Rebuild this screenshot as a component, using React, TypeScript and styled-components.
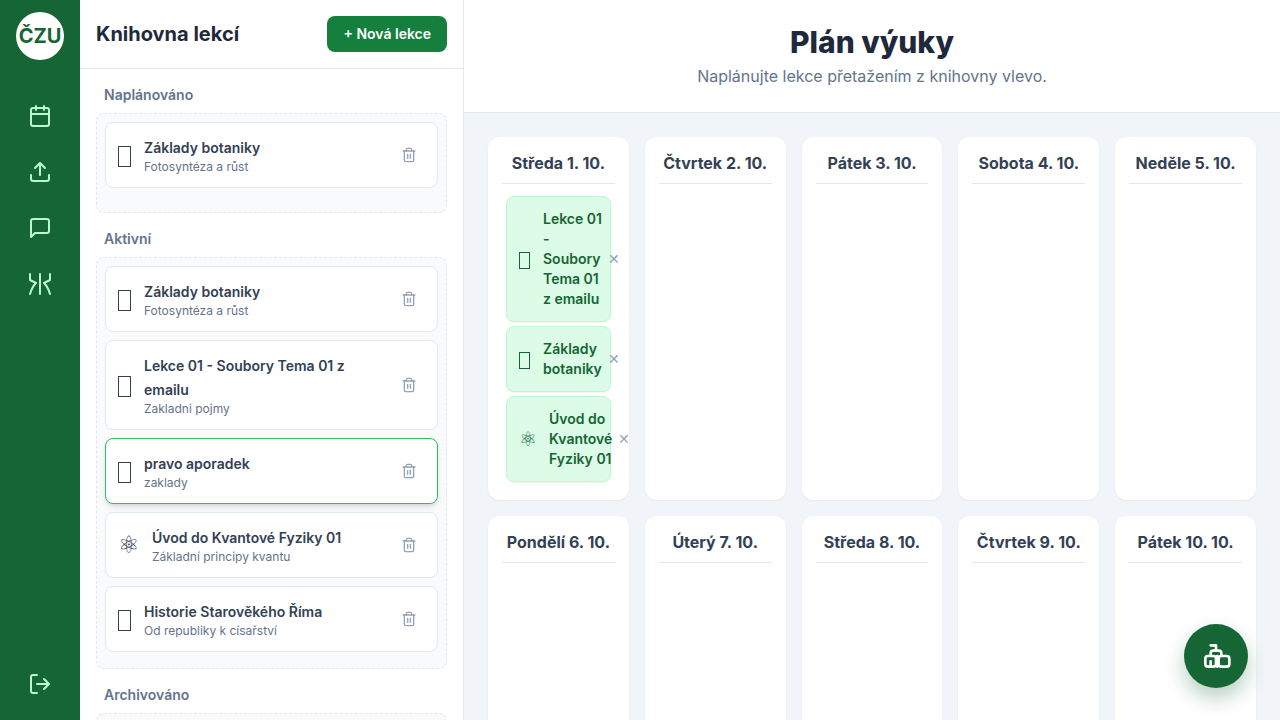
import React from "react";
import styled, { createGlobalStyle } from "styled-components";

const GlobalStyle = createGlobalStyle`
  *, *::before, *::after { box-sizing: border-box; }
  body {
    margin: 0;
    font-family: Inter, "Liberation Sans", sans-serif;
    font-size: 16px;
    line-height: 24px;
    color: #1e293b;
    background: #f1f5f9;
  }
  h1, h2, h3, p { margin: 0; }
  button { font: inherit; border: 0; padding: 0; background: none; cursor: pointer; }
`;

const Shell = styled.div`
  display: flex;
  height: 100vh;
  overflow: hidden;
`;

const Sidebar = styled.aside`
  display: flex;
  flex-direction: column;
  align-items: center;
  flex: none;
  width: 80px;
  padding: 12px 0;
  background: #166534;
`;

const Logo = styled.div`
  display: flex;
  align-items: center;
  justify-content: center;
  flex: none;
  width: 48px;
  height: 48px;
  margin-bottom: 32px;
  border-radius: 50%;
  background: #fff;
  color: #166534;
  font-size: 20px;
  line-height: 28px;
  font-weight: 700;
`;

const Nav = styled.nav`
  display: flex;
  flex-direction: column;
  flex: 1;
  gap: 8px;
`;

const NavButton = styled.button`
  display: flex;
  padding: 12px;
  border-radius: 8px;
  color: #bbf7d0;
`;

const Library = styled.section`
  display: flex;
  flex-direction: column;
  flex: none;
  width: 384px;
  border-right: 1px solid #e2e8f0;
  background: #fff;
`;

const LibraryHeader = styled.header`
  display: flex;
  align-items: center;
  justify-content: space-between;
  padding: 16px;
  border-bottom: 1px solid #e2e8f0;
`;

const LibraryTitle = styled.h2`
  font-size: 20px;
  line-height: 28px;
  font-weight: 700;
`;

const NewButton = styled.button`
  padding: 8px 16px;
  border-radius: 8px;
  background: #15803d;
  color: #fff;
  font-size: 14px;
  line-height: 20px;
  font-weight: 600;
`;

const LibraryBody = styled.div`
  display: flex;
  flex-direction: column;
  flex: 1;
  gap: 16px;
  min-height: 0;
  padding: 16px;
  overflow: hidden;
`;

const GroupTitle = styled.h3`
  margin-bottom: 8px;
  padding: 0 8px;
  color: #64748b;
  font-size: 14px;
  line-height: 20px;
  font-weight: 600;
`;

const DropZone = styled.div`
  min-height: 100px;
  padding: 8px;
  border: 1px dashed #e2e8f0;
  border-radius: 8px;
  background: #f8fafc;
`;

const LessonCard = styled.article<{ $selected?: boolean }>`
  display: flex;
  align-items: center;
  gap: 12px;
  margin-bottom: 8px;
  padding: 12px;
  border: 1px solid ${(p) => (p.$selected ? "#22c55e" : "#e2e8f0")};
  border-radius: 8px;
  background: #fff;
  color: #334155;
  box-shadow: ${(p) =>
    p.$selected ? "0 4px 6px -1px rgba(0, 0, 0, 0.1), 0 2px 4px -2px rgba(0, 0, 0, 0.1)" : "none"};
`;

const LessonGlyph = styled.span<{ $small?: boolean }>`
  flex: none;
  font-size: ${(p) => (p.$small ? 20 : 24)}px;
  line-height: ${(p) => (p.$small ? 28 : 32)}px;
`;

const LessonBox = styled.span<{ $small?: boolean }>`
  flex: none;
  padding: 3px 1px 0 0;

  &::before {
    content: "";
    display: block;
    width: ${(p) => (p.$small ? 11 : 13)}px;
    height: ${(p) => (p.$small ? 17 : 21)}px;
    border: 1px solid currentColor;
  }
`;

const LessonText = styled.div`
  flex: 1;
`;

const LessonName = styled.p`
  span {
    font-size: 14px;
    line-height: 20px;
    font-weight: 600;
  }
`;

const LessonNote = styled.p`
  color: #64748b;
  font-size: 12px;
  line-height: 16px;
`;

const DeleteButton = styled.button`
  display: flex;
  flex: none;
  padding: 8px;
  color: #94a3b8;
`;

const Main = styled.main`
  display: flex;
  flex-direction: column;
  flex: 1;
  min-width: 0;
  overflow: hidden;
`;

const PlanHeader = styled.header`
  padding: 24px;
  border-bottom: 1px solid #e2e8f0;
  background: #fff;
  text-align: center;
`;

const PlanTitle = styled.h1`
  font-size: 30px;
  line-height: 36px;
  font-weight: 800;
`;

const PlanHint = styled.p`
  margin-top: 4px;
  color: #64748b;
`;

const Calendar = styled.div`
  display: grid;
  flex: none;
  grid-template-columns: repeat(5, minmax(0, 1fr));
  gap: 16px;
  padding: 24px;
`;

const Day = styled.section`
  min-height: 320px;
  padding: 12px;
  border: 2px solid transparent;
  border-radius: 12px;
  background: #fff;
  box-shadow: 0 1px 2px rgba(0, 0, 0, 0.05);
`;

const DayTitle = styled.h3`
  margin-bottom: 8px;
  padding-bottom: 8px;
  border-bottom: 1px solid #e2e8f0;
  color: #334155;
  font-size: 16px;
  line-height: 24px;
  font-weight: 700;
  text-align: center;
  white-space: nowrap;
`;

const DayList = styled.div`
  display: flex;
  flex-direction: column;
  gap: 4px;
  padding: 4px;
`;

const Planned = styled.article`
  display: flex;
  align-items: center;
  padding: 12px;
  border: 1px solid #bbf7d0;
  border-radius: 8px;
  background: #dcfce7;
  color: #166534;
  box-shadow: 0 1px 2px rgba(0, 0, 0, 0.05);
`;

const PlannedName = styled.p`
  flex: 1;
  margin-left: 12px;
  font-size: 14px;
  line-height: 20px;
  font-weight: 600;
`;

const RemoveButton = styled.button`
  flex: none;
  margin-left: 6px;
  color: #94a3b8;
  font-size: 14px;
  line-height: 20px;
`;

const ChatButton = styled.button`
  position: fixed;
  right: 32px;
  bottom: 32px;
  display: flex;
  align-items: center;
  justify-content: center;
  width: 64px;
  height: 64px;
  border-radius: 50%;
  background: #166534;
  color: #fff;
  box-shadow: 0 10px 20px rgba(22, 101, 52, 0.3);
`;

function Icon({ size = 24, width = 2, children }: { size?: number; width?: number; children: React.ReactNode }) {
  return (
    <svg width={size} height={size} viewBox="0 0 24 24" fill="none" stroke="currentColor"
      strokeWidth={width} strokeLinecap="round" strokeLinejoin="round" aria-hidden="true">
      {children}
    </svg>
  );
}

const TrashIcon = () => (
  <Icon size={16}>
    <path d="M3 6h18" />
    <path d="M19 6v14a2 2 0 0 1-2 2H7a2 2 0 0 1-2-2V6m3 0V4a2 2 0 0 1 2-2h4a2 2 0 0 1 2 2v2" />
    <path d="M10 11v6M14 11v6" />
  </Icon>
);

function LessonIcon({ glyph, small }: { glyph?: string; small?: boolean }) {
  return glyph ? <LessonGlyph $small={small}>{glyph}</LessonGlyph> : <LessonBox $small={small} />;
}

type Lesson = { icon?: string; name: string; note: string; selected?: boolean };

const groups: { title: string; lessons: Lesson[] }[] = [
  { title: "Naplánováno", lessons: [{ name: "Základy botaniky", note: "Fotosyntéza a růst" }] },
  {
    title: "Aktivní",
    lessons: [
      { name: "Základy botaniky", note: "Fotosyntéza a růst" },
      { name: "Lekce 01 - Soubory Tema 01 z emailu", note: "Zakladni pojmy" },
      { name: "pravo aporadek", note: "zaklady", selected: true },
      { icon: "⚛", name: "Úvod do Kvantové Fyziky 01", note: "Základní principy kvantu" },
      { name: "Historie Starověkého Říma", note: "Od republiky k císařství" },
    ],
  },
  { title: "Archivováno", lessons: [] },
];

const days: { title: string; items?: { icon?: string; name: string }[] }[] = [
  {
    title: "Středa 1. 10.",
    items: [
      { name: "Lekce\u00a001 - Soubory Tema 01 z emailu" },
      { name: "Základy botaniky" },
      { icon: "⚛", name: "Úvod do Kvantové Fyziky 01" },
    ],
  },
  { title: "Čtvrtek 2. 10." },
  { title: "Pátek 3. 10." },
  { title: "Sobota 4. 10." },
  { title: "Neděle 5. 10." },
  { title: "Pondělí 6. 10." },
  { title: "Úterý 7. 10." },
  { title: "Středa 8. 10." },
  { title: "Čtvrtek 9. 10." },
  { title: "Pátek 10. 10." },
];

export default function App() {
  return (
    <Shell>
      <GlobalStyle />
      <Sidebar>
        <Logo>ČZU</Logo>
        <Nav>
          <NavButton aria-label="Kalendář">
            <Icon>
              <rect x="3" y="4" width="18" height="18" rx="2" />
              <path d="M16 2v4M8 2v4M3 10h18" />
            </Icon>
          </NavButton>
          <NavButton aria-label="Nahrát">
            <Icon>
              <path d="M21 15v4a2 2 0 0 1-2 2H5a2 2 0 0 1-2-2v-4" />
              <path d="M17 8l-5-5-5 5M12 3v12" />
            </Icon>
          </NavButton>
          <NavButton aria-label="Zprávy">
            <Icon>
              <path d="M21 15a2 2 0 0 1-2 2H7l-4 4V5a2 2 0 0 1 2-2h14a2 2 0 0 1 2 2z" />
            </Icon>
          </NavButton>
          <NavButton aria-label="Analýza">
            <Icon>
              <path d="M12 2v20M2 2v6l6 3q-4 4-6 11M22 2v6l-6 3q4 4 6 11" />
            </Icon>
          </NavButton>
        </Nav>
        <NavButton aria-label="Odhlásit">
          <Icon>
            <path d="M9 21H5a2 2 0 0 1-2-2V5a2 2 0 0 1 2-2h4" />
            <path d="M16 17l5-5-5-5M21 12H9" />
          </Icon>
        </NavButton>
      </Sidebar>

      <Library>
        <LibraryHeader>
          <LibraryTitle>Knihovna lekcí</LibraryTitle>
          <NewButton>+ Nová lekce</NewButton>
        </LibraryHeader>
        <LibraryBody>
          {groups.map((group) => (
            <section key={group.title}>
              <GroupTitle>{group.title}</GroupTitle>
              <DropZone>
                {group.lessons.map((lesson) => (
                  <LessonCard key={lesson.name} $selected={lesson.selected}>
                    <LessonIcon glyph={lesson.icon} />
                    <LessonText>
                      <LessonName><span>{lesson.name}</span></LessonName>
                      <LessonNote>{lesson.note}</LessonNote>
                    </LessonText>
                    <DeleteButton aria-label="Smazat lekci">
                      <TrashIcon />
                    </DeleteButton>
                  </LessonCard>
                ))}
              </DropZone>
            </section>
          ))}
        </LibraryBody>
      </Library>

      <Main>
        <PlanHeader>
          <PlanTitle>Plán výuky</PlanTitle>
          <PlanHint>Naplánujte lekce přetažením z knihovny vlevo.</PlanHint>
        </PlanHeader>
        <Calendar>
          {days.map((day) => (
            <Day key={day.title}>
              <DayTitle>{day.title}</DayTitle>
              <DayList>
                {day.items?.map((item) => (
                  <Planned key={item.name}>
                    <LessonIcon glyph={item.icon} small />
                    <PlannedName>{item.name}</PlannedName>
                    <RemoveButton aria-label="Odebrat z plánu">✕</RemoveButton>
                  </Planned>
                ))}
              </DayList>
            </Day>
          ))}
        </Calendar>
      </Main>

      <ChatButton aria-label="Otevřít asistenta">
        <Icon size={32}>
          <path d="M8 4h4v4" />
          <rect x="4" y="12" width="8" height="8" rx="2" />
          <rect x="14" y="12" width="8" height="8" rx="2" />
          <path d="M8 11v-1a2 2 0 0 1 2-2h4a2 2 0 0 1 2 2v1M8 20v-4M13 12v8" />
        </Icon>
      </ChatButton>
    </Shell>
  );
}
